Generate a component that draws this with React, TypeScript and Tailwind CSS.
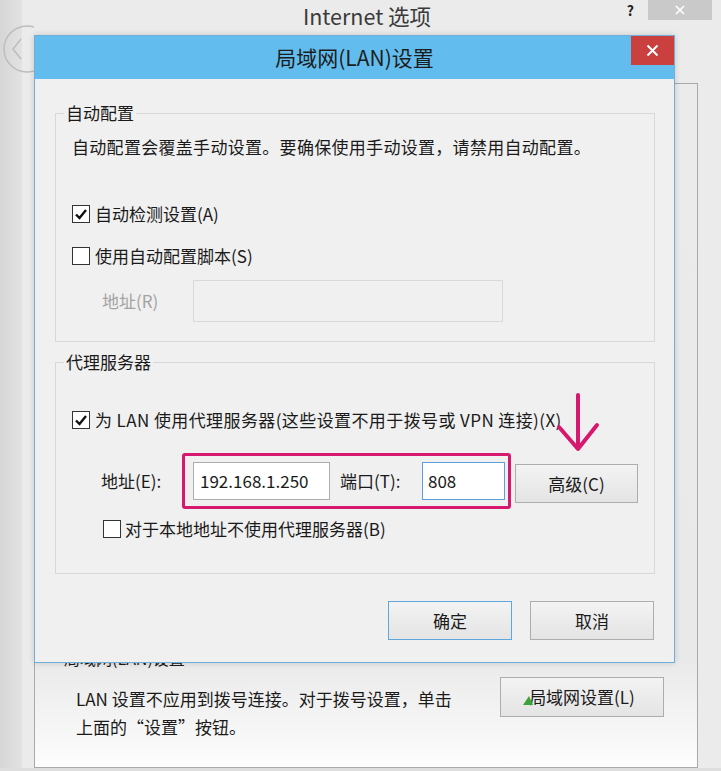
import React from 'react'

const font = "font-['Noto_Sans_CJK_SC',sans-serif]"

function Check({ checked }: { checked?: boolean }) {
  return (
    <span className="flex h-[18px] w-[18px] shrink-0 items-center justify-center border border-[#333333] bg-white">
      {checked && (
        <svg width="14" height="14" viewBox="0 0 14 14">
          <path d="M2 7.5 L5.5 11 L12 3" fill="none" stroke="#111" strokeWidth="2.4" />
        </svg>
      )}
    </span>
  )
}

function WinButton({ children, focus, className = '' }: { children: React.ReactNode; focus?: boolean; className?: string }) {
  return (
    <div
      className={`flex items-center justify-center border bg-linear-to-b from-[#f3f3f3] to-[#e4e4e4] text-[17px] text-[#1a1a1a] ${
        focus ? 'border-[#5fa6dc]' : 'border-[#adadad]'
      } ${className}`}
    >
      {children}
    </div>
  )
}

export default function App() {
  return (
    <div className={`relative h-[771px] w-[721px] overflow-hidden bg-[#ebebeb] text-[#1a1a1a] ${font}`}>
      {/* background window: Internet 选项 */}
      <div className="flex h-full">
        <div className="w-[22px] bg-linear-to-r from-[#d6d6d6] to-[#e2e2e2]" />
        <div className="flex flex-1 flex-col">
          <div className="flex h-[35px]">
            <div className="flex-1" />
            <div className="text-[21.5px] leading-[31px] text-[#3a3a3a]">Internet 选项</div>
            <div className="flex flex-1 items-start justify-end pr-[9px]">
              <span className="mr-[14px] pt-[2px] text-[14px] font-bold leading-[16px] text-[#222]">?</span>
              <div className="flex h-[20px] w-[64px] items-center justify-center bg-[#c9c9c9]">
                <svg width="10" height="10" viewBox="0 0 10 10">
                  <path d="M1 1 L9 9 M9 1 L1 9" stroke="#fff" strokeWidth="1.6" />
                </svg>
              </div>
            </div>
          </div>
          <div className="h-[48px]" />
          <div className="mb-[3px] ml-[12px] mr-[23px] flex flex-1 flex-col justify-end border border-[#a9a9a9] bg-[linear-gradient(to_bottom,#ebebeb_0%,#e9e9e9_84%,#fdfdfd_100%)] pb-[26px]">
            <div className="pl-[29px] text-[16px] leading-[20px]">局域网(LAN)设置</div>
            <div className="mt-[9px] flex items-start">
              <div className="mt-[8px] pl-[41px] text-[17px] leading-[28px]">
                <div>LAN 设置不应用到拨号连接。对于拨号设置，单击</div>
                <div>上面的“设置”按钮。</div>
              </div>
              <WinButton className="relative ml-auto mr-[33px] h-[40px] w-[164px]">
                <svg className="absolute left-[22px] top-[18px]" width="10" height="9" viewBox="0 0 10 9">
                  <path d="M0 9 L6 0 L10 9 Z" fill="#3aa43a" />
                </svg>
                局域网设置(L)
              </WinButton>
            </div>
          </div>
        </div>
      </div>

      {/* back arrow circle of the background window */}
      <svg className="absolute left-0 top-[22px]" width="34" height="54" viewBox="0 0 34 54">
        <circle cx="27" cy="27" r="23" fill="none" stroke="#bdbdbd" strokeWidth="1.5" />
        <path d="M21 17 L13 27 L21 37" fill="none" stroke="#bdbdbd" strokeWidth="1.5" />
      </svg>

      {/* dialog: 局域网(LAN)设置 */}
      <div className="absolute left-[34px] top-[35px] flex h-[628px] w-[641px] flex-col border border-[#6eaedb] bg-[#f0f0f0] shadow-[0_0_6px_rgba(0,0,0,0.15)]">
        <div className="relative flex h-[43px] shrink-0 items-center justify-center bg-[#62bdee]">
          <span className="text-[21px] text-[#1c1c1c]">局域网(LAN)设置</span>
          <div className="absolute right-0 top-0 flex h-[29px] w-[43px] items-center justify-center bg-[#c9403f]">
            <svg width="13" height="13" viewBox="0 0 13 13">
              <path d="M1.5 1.5 L11.5 11.5 M11.5 1.5 L1.5 11.5" stroke="#fff" strokeWidth="2" />
            </svg>
          </div>
        </div>

        <div className="flex flex-1 flex-col pl-[20px] pr-[19px] pt-[22px] text-[17px]">
          <fieldset className="border border-[#d8d8d8] pb-[19px] pl-[16px]">
            <legend className="-ml-[8px] px-[2px] leading-[24px]">自动配置</legend>
            <div className="mt-[10px] tracking-[0.3px] leading-[24px]">自动配置会覆盖手动设置。要确保使用手动设置，请禁用自动配置。</div>
            <div className="mt-[43px] flex h-[24px] items-center gap-[5px]">
              <Check checked />
              <span>自动检测设置(A)</span>
            </div>
            <div className="mt-[18px] flex h-[24px] items-center gap-[5px]">
              <Check />
              <span>使用自动配置脚本(S)</span>
            </div>
            <div className="mt-[12px] flex items-center pl-[30px]">
              <span className="w-[91px] text-[#a3a3a3]">地址(R)</span>
              <div className="h-[42px] w-[310px] border border-[#d9d9d9] bg-[#f0f0f0]" />
            </div>
          </fieldset>

          <fieldset className="mt-[8px] border border-[#d8d8d8] pb-[32px] pl-[16px]">
            <legend className="-ml-[8px] px-[2px] leading-[24px]">代理服务器</legend>
            <div className="mt-[34px] flex h-[24px] items-center gap-[5px]">
              <Check checked />
              <span className="tracking-[0.4px]">为 LAN 使用代理服务器(这些设置不用于拨号或 VPN 连接)(X)</span>
            </div>
            <div className="mt-[21px] flex items-center pl-[29px]">
              <span className="w-[81px]">地址(E):</span>
              <div className="flex items-center rounded-[3px] border-[3px] border-[#d6196f] py-[6px] pl-[8px] pr-[3px]">
                <div className="flex h-[38px] w-[137px] items-center border border-[#abadb3] bg-white pl-[6px]">192.168.1.250</div>
                <span className="w-[92px] pl-[10px]">端口(T):</span>
                <div className="flex h-[38px] w-[83px] items-center border border-[#5a9fdc] bg-white pl-[5px]">808</div>
              </div>
              <WinButton className="ml-[4px] mt-[5px] h-[39px] w-[123px]">高级(C)</WinButton>
            </div>
            <div className="mt-[8px] flex h-[24px] items-center gap-[4px] pl-[31px]">
              <Check />
              <span>对于本地地址不使用代理服务器(B)</span>
            </div>
          </fieldset>

          <div className="mt-[27px] flex justify-end gap-[18px] pr-[1px]">
            <WinButton focus className="h-[39px] w-[124px]">确定</WinButton>
            <WinButton className="h-[39px] w-[124px]">取消</WinButton>
          </div>
        </div>
      </div>

      {/* pink annotation arrow */}
      <svg className="pointer-events-none absolute left-[552px] top-[392px]" width="52" height="62" viewBox="0 0 52 62">
        <path d="M26 3 L26 56" stroke="#d6196f" strokeWidth="4" strokeLinecap="round" />
        <path d="M7 35 L26 57 L45 33" fill="none" stroke="#d6196f" strokeWidth="4" strokeLinecap="round" strokeLinejoin="round" />
      </svg>

      <div className="absolute bottom-0 left-0 h-[3px] w-full bg-[#dedede]" />
    </div>
  )
}
